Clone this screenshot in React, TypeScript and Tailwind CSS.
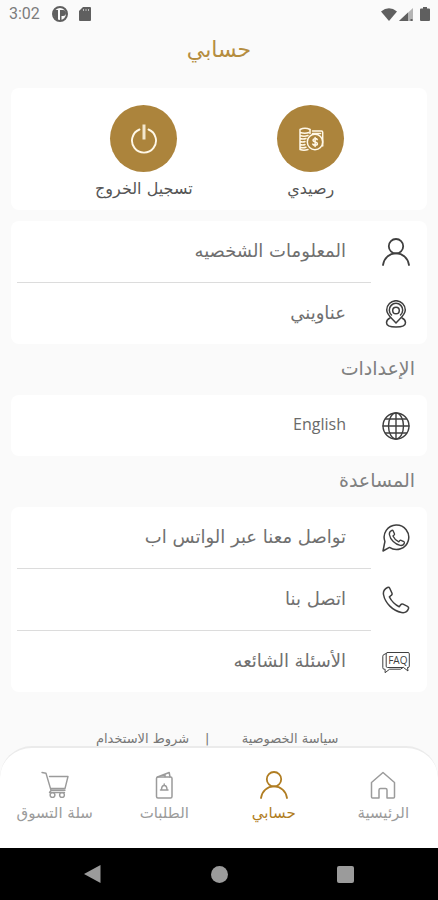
import type { ReactNode } from "react";

const stroke = {
  fill: "none",
  stroke: "currentColor",
  strokeLinecap: "round" as const,
  strokeLinejoin: "round" as const,
};

function UserIcon() {
  return (
    <svg viewBox="0 0 28 28" className="size-7" {...stroke} strokeWidth="1.8">
      <circle cx="14" cy="8.2" r="7.2" />
      <path d="M1 27c1-7 6.300-11.600 13-11.600S26 20 27 27" />
    </svg>
  );
}

function PinIcon() {
  return (
    <svg viewBox="0 0 28 28" className="size-7" {...stroke} strokeWidth="1.5">
      <path d="M14 23C9.500 18 4.700 14.800 4.700 10a9.300 9.300 0 0 1 18.600 0c0 4.800-4.800 8-9.300 13z" />
      <path d="M9.500 15a6.700 6.700 0 1 1 9 0" />
      <circle cx="14" cy="10.500" r="3.300" />
      <path d="M8 18C5.700 19 4.500 20.700 4.500 22.700 4.500 25.500 9 27 14 27s9.500-1.500 9.500-4.300c0-2-1.200-3.700-3.500-4.700" />
    </svg>
  );
}

function GlobeIcon() {
  return (
    <svg viewBox="0 0 28 28" className="size-7" {...stroke} strokeWidth="1.400">
      <circle cx="14" cy="14" r="13" />
      <ellipse cx="14" cy="14" rx="7.500" ry="13" />
      <path d="M14 1v26M1 14h26M3.500 7h21M3.500 21h21" />
    </svg>
  );
}

const handset =
  "M5.500 1.500C2.500 3 1 5.500 1.500 8.500 3 17 11 25 19.500 26.500c3 .5 6-1 7-4 .3-1-.1-1.700-1-2.200l-4.500-2.200c-.9-.4-1.700-.2-2.300.6l-1.500 2c-3.500-1.500-8-6-9.800-9.800l1.900-1.600c.8-.6 1-1.400.6-2.300L7.700 2.300c-.4-.9-1.200-1.200-2.200-.8z";

function WhatsAppIcon() {
  return (
    <svg viewBox="0 0 28 28" className="size-7" {...stroke} strokeWidth="1.5">
      <path d="M1 27l1.900-9.500A12.300 12.300 0 1 1 7.500 23.400z" />
      <path d={handset} transform="translate(6.500 5.500) scale(.6)" strokeWidth="2.200" />
    </svg>
  );
}

function PhoneIcon() {
  return (
    <svg viewBox="0 0 28 28" className="size-7" {...stroke} strokeWidth="1.5">
      <path d={handset} />
    </svg>
  );
}

function FaqIcon() {
  return (
    <svg viewBox="0 0 28 28" className="size-7" {...stroke} strokeWidth="1">
      <path d="M5.500 4.500H26q1.300 0 1.300 1.300v12.400q0 1.300-1.300 1.300h-.5l.5 3.500-4.500-3.500h-16q-1.300 0-1.300-1.300V5.800q0-1.300 1.300-1.300z" />
      <path d="M4.200 5.500L2 6.500Q.8 7 .8 8.200v11.500q0 1.500 1.300 1.500h1v3.500l4.500-3.500h11l2.400-1.700" />
      <text
        x="15.800"
        y="15.500"
        textAnchor="middle"
        fill="currentColor"
        stroke="none"
        className="font-['Open_Sans',sans-serif] text-[10px]"
      >
        FAQ
      </text>
    </svg>
  );
}

function PowerIcon() {
  return (
    <svg viewBox="0 0 28 30" className="h-[30px] w-7" {...stroke} strokeWidth="1.900">
      <path d="M9.500 5.500a12 12 0 1 0 9 0" />
      <path d="M14 .500v15" strokeWidth="3" strokeLinecap="butt" opacity=".85" />
    </svg>
  );
}

function BalanceIcon() {
  return (
    <svg viewBox="0 0 26 26" className="size-[26px]" {...stroke} strokeWidth="1.500">
      <path d="M2 3.500Q7 1 12 3.500M2 3.500v20q4 1.500 8 0M2 6.500q5 1.500 9 0M2 9.500q4 1.500 8 0M2 12.500q3 1 6 0M2 15.500q3 1 5 0M2 18.500q3 1 5 0M2 21.200q3 1 6 0" />
      <path d="M12 3.500v4M14.500 5h9q1.200 0 1.200 1.200V20M14.500 7.500h8" />
      <circle cx="17" cy="16" r="7.700" />
      <path d="M19.200 13.600c-.6-1.400-4.200-1.400-4.200.6 0 2.200 4.400 1.300 4.400 3.500 0 2-3.900 2-4.600.4M17.100 11.500v9" />
    </svg>
  );
}

function HomeIcon() {
  return (
    <svg viewBox="0 0 28 28" className="size-7" {...stroke} strokeWidth="1.500">
      <path d="M14 1.500L2.500 11.500V26q0 1 1 1H10v-8q0-1.500 1.500-1.500h5Q18 17.500 18 19v8h6.500q1 0 1-1V11.500z" />
    </svg>
  );
}

function OrdersIcon() {
  return (
    <svg viewBox="0 0 28 28" className="size-7" {...stroke} strokeWidth="1.500">
      <rect x="6.500" y="6" width="15.500" height="21" rx="1.500" />
      <path d="M7.500 6l11.700-4.500L20 6M15 3.500v2.300" />
      <path d="M10.500 19h7.500M11.500 19c0-6 5.500-6 5.500 0M14.200 14.300v-1.200" />
    </svg>
  );
}

function CartIcon() {
  return (
    <svg viewBox="0 0 28 28" className="size-7" {...stroke} strokeWidth="1.400">
      <path d="M1 1.500l4 .8 5 17h14M8.500 5.500H27l-3 12H9.500M10 19.500l-1.500 2h15" />
      <circle cx="11.500" cy="24" r="2.400" />
      <circle cx="21" cy="24" r="2.400" />
    </svg>
  );
}

function StatusBar() {
  return (
    <div dir="ltr" className="flex h-7 shrink-0 items-center justify-between pr-2 pl-[9px] text-[#5f5f5f]">
      <div className="flex items-center">
        <span className="w-[43px] font-[Roboto,sans-serif] text-base text-[#7c7c7c]">3:02</span>
        <svg viewBox="0 0 16 16" className="size-4">
          <circle cx="8" cy="8" r="7" fill="none" stroke="currentColor" strokeWidth="2" />
          <path d="M2 4h4v10H4L1.500 9zM8 4h3a2.700 2.700 0 0 1 0 6H9.500v5H8z" fill="currentColor" />
        </svg>
        <svg viewBox="0 0 12 14" className="ml-[11px] h-3.5 w-3" fill="currentColor">
          <path d="M4 0h7q1 0 1 1v12q0 1-1 1H1q-1 0-1-1V4z" />
          <path d="M4.500 2v2M7 2v2M9.500 2v2" stroke="#bdbdbd" />
        </svg>
      </div>
      <div className="flex items-center">
        <svg viewBox="0 0 16 13" className="h-[13px] w-4" fill="currentColor">
          <path d="M8 13L0 3.500Q8-3 16 3.500z" />
        </svg>
        <svg viewBox="0 0 14 13" className="ml-0.5 h-[13px] w-3.5" fill="currentColor">
          <path d="M14 0v13H0z" fill="#b4b4b4" />
          <path d="M9 4.500V13H0zM11.500 11h2v2h-2z" />
        </svg>
        <svg viewBox="0 0 10 14" className="ml-[7px] h-3.5 w-2.5" fill="currentColor">
          <path d="M3 0h4v1.500h2q1 0 1 1V13q0 1-1 1H1q-1 0-1-1V2.500q0-1 1-1h2z" />
        </svg>
      </div>
    </div>
  );
}

function Shortcut({ label, width, children }: { label: string; width: string; children: ReactNode }) {
  return (
    <button type="button" className={`flex flex-col items-center gap-[5px] text-[#555] ${width}`}>
      <span className="flex size-[67px] items-center justify-center rounded-full bg-[#ac843c] text-[#fff8e8]">
        {children}
      </span>
      <span className="text-base leading-6 whitespace-nowrap">{label}</span>
    </button>
  );
}

type Item = { label: string; icon: ReactNode; latin?: boolean };

function MenuCard({ items }: { items: Item[] }) {
  return (
    <ul className="rounded-lg bg-white">
      {items.map((item, index) => (
        <li key={item.label}>
          {index > 0 && <div className="mr-14 ml-1.5 h-px bg-[#dcdcdc]" />}
          <a href="#" className="flex h-[61px] items-center gap-9 pr-[17px] pl-4 text-[#3f3f3f]">
            {item.icon}
            <span
              className={
                item.latin
                  ? "pb-1 font-['Open_Sans',sans-serif] text-base leading-6 text-[#6a6a6a]"
                  : "pb-0.5 text-lg leading-6 text-[#707070]"
              }
            >
              {item.label}
            </span>
          </a>
        </li>
      ))}
    </ul>
  );
}

function SectionTitle({ children }: { children: ReactNode }) {
  return <h2 className="flex h-[51px] items-center px-3 pb-1 text-[19px] leading-6 text-[#808080]">{children}</h2>;
}

const account: Item[] = [
  { label: "المعلومات الشخصيه", icon: <UserIcon /> },
  { label: "عناويني", icon: <PinIcon /> },
];
const settings: Item[] = [{ label: "English", icon: <GlobeIcon />, latin: true }];
const help: Item[] = [
  { label: "تواصل معنا عبر الواتس اب", icon: <WhatsAppIcon /> },
  { label: "اتصل بنا", icon: <PhoneIcon /> },
  { label: "الأسئلة الشائعه", icon: <FaqIcon /> },
];

const tabs = [
  { label: "الرئيسية", icon: <HomeIcon />, active: false },
  { label: "حسابي", icon: <UserIcon />, active: true },
  { label: "الطلبات", icon: <OrdersIcon />, active: false },
  { label: "سلة التسوق", icon: <CartIcon />, active: false },
];

export default function App() {
  return (
    <div
      dir="rtl"
      lang="ar"
      className="flex h-screen flex-col bg-[#fafafa] font-['DejaVu_Sans',sans-serif]"
    >
      <StatusBar />
      <h1 className="flex h-[60px] shrink-0 items-start justify-center pt-2 text-[22px] leading-7 text-[#b58d3f]">
        حسابي
      </h1>
      <main className="min-h-0 flex-1 overflow-y-auto px-[11px] [scrollbar-width:none]">
        <section className="mb-[11px] flex h-[122px] justify-evenly rounded-lg bg-white pt-[17px]">
          <Shortcut label="رصيدي" width="w-[68px]">
            <BalanceIcon />
          </Shortcut>
          <Shortcut label="تسجيل الخروج" width="w-[101px]">
            <PowerIcon />
          </Shortcut>
        </section>
        <MenuCard items={account} />
        <SectionTitle>الإعدادات</SectionTitle>
        <MenuCard items={settings} />
        <SectionTitle>المساعدة</SectionTitle>
        <MenuCard items={help} />
        <footer className="flex justify-center gap-[15px] pt-[37px] text-[13px] leading-5 text-[#777]">
          <a href="#" className="w-[106px] text-center whitespace-nowrap">
            سياسة الخصوصية
          </a>
          <span className="w-[17px] text-left">|</span>
          <a href="#" className="w-[95px] text-center whitespace-nowrap">
            شروط الاستخدام
          </a>
        </footer>
      </main>
      <nav className="grid h-[102px] shrink-0 grid-cols-4 rounded-t-[32px] border-t-2 border-[#ebebeb] bg-white pt-[23px]">
        {tabs.map((tab) => (
          <a
            key={tab.label}
            href="#"
            className={`flex flex-col items-center gap-1 ${tab.active ? "text-[#b07d22]" : "text-[#9b9b9b]"}`}
          >
            {tab.icon}
            <span className="text-[15px] leading-5 whitespace-nowrap">{tab.label}</span>
          </a>
        ))}
      </nav>
      <div dir="ltr" className="flex h-[52px] shrink-0 items-center justify-center gap-[109px] bg-black text-[#9b9b9b]">
        <button type="button" aria-label="رجوع">
          <svg viewBox="0 0 18 18" className="size-[18px]" fill="currentColor">
            <path d="M16.500 0v18L0 9z" />
          </svg>
        </button>
        <button type="button" aria-label="الشاشة الرئيسية" className="size-[17px] rounded-full bg-[#9b9b9b]" />
        <button type="button" aria-label="التطبيقات" className="size-[17px] rounded-xs bg-[#9b9b9b]" />
      </div>
    </div>
  );
}
